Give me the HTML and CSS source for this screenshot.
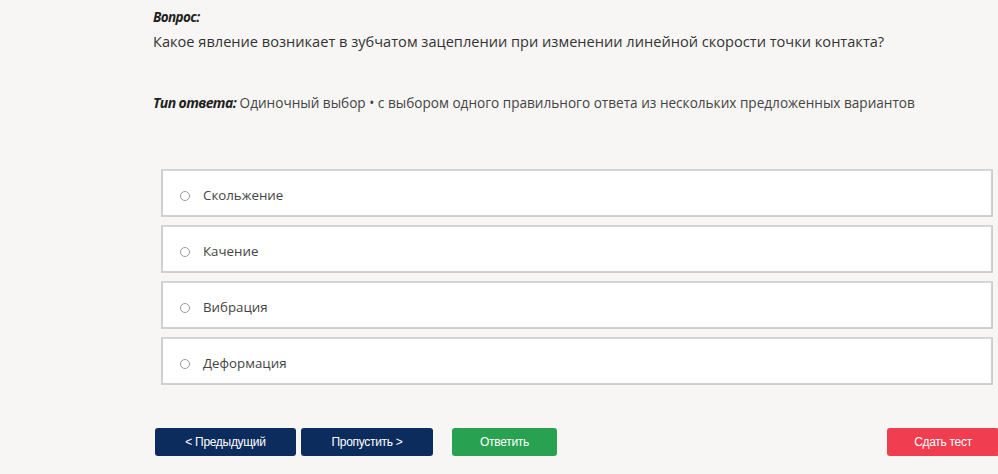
FILE: index.html
```html
<!DOCTYPE html>
<html lang="ru">
<head>
    <meta charset="UTF-8">
    <meta name="viewport" content="width=device-width, initial-scale=1.0">
    <title>Тест</title>
    <link rel="stylesheet" href="styles.css">
</head>
<body>
<div class="quiz">
    <!-- Вопрос -->
    <div class="question">
        <div class="label">Вопрос:</div>
        <div class="question-text">Какое явление возникает в зубчатом зацеплении при изменении линейной скорости точки контакта?</div>
    </div>

    <div class="answer-type"><span class="label">Тип ответа:</span> Одиночный выбор • с выбором одного правильного ответа из нескольких предложенных вариантов</div>

    <!-- Варианты ответа -->
    <div class="options">
        <label class="option"><span class="radio"></span>Скольжение</label>
        <label class="option"><span class="radio"></span>Качение</label>
        <label class="option"><span class="radio"></span>Вибрация</label>
        <label class="option"><span class="radio"></span>Деформация</label>
    </div>

    <!-- Кнопки -->
    <div class="actions">
        <button class="btn btn-nav">&lt; Предыдущий</button>
        <button class="btn btn-nav btn-skip">Пропустить &gt;</button>
        <button class="btn btn-answer">Ответить</button>
        <button class="btn btn-submit">Сдать тест</button>
    </div>
</div>
</body>
</html>
```

FILE: styles.css
```css
body {
    margin: 0;
    padding: 0;
    background-color: #f7f6f4;
    font-family: "Open Sans", "Noto Sans", sans-serif;
    color: #333;
    overflow: hidden;
}

.quiz {
    padding: 8px 0 0 153px;
}

.label {
    font-weight: 700;
    font-style: italic;
    color: #1f1f1f;
    letter-spacing: -0.6px;
}

.question .label {
    font-size: 13.5px;
    line-height: 18px;
}

.question-text {
    font-size: 14.6px;
    line-height: 20px;
    margin-top: 5px;
    color: #333;
}

.answer-type {
    font-size: 13.6px;
    line-height: 20px;
    margin-top: 42px;
    color: #444;
}

.answer-type .label {
    font-size: 14px;
}

/* Варианты */
.options {
    margin: 56px 5px 0 8px;
    display: flex;
    flex-direction: column;
    gap: 8px;
}

.option {
    display: flex;
    align-items: center;
    padding: 3px 0 0 17px;
    height: 41px;
    background: #fff;
    border: 2px solid #cfcfcf;
    border-top-color: #d6d6d6;
    font-size: 13.3px;
    color: #444;
}

.radio {
    width: 8px;
    height: 8px;
    border: 1px solid #9a9a9a;
    border-radius: 50%;
    margin-right: 13px;
    margin-top: 2px;
}

/* Кнопки */
.actions {
    display: flex;
    margin: 43px 0 0 2px;
}

.btn {
    height: 28px;
    border: none;
    border-radius: 3px;
    color: #fff;
    font-family: "Liberation Sans", Arial, sans-serif;
    font-size: 12px;
    letter-spacing: -0.3px;
    cursor: pointer;
}

.btn-nav {
    background-color: #0d2c5e;
    width: 141px;
}

.btn-skip {
    width: 132px;
    margin-left: 5px;
}

.btn-answer {
    background-color: #28a150;
    width: 105px;
    margin-left: 19px;
}

.btn-submit {
    background-color: #f03d50;
    width: 112px;
    margin-left: auto;
    margin-right: -1px;
}
```
